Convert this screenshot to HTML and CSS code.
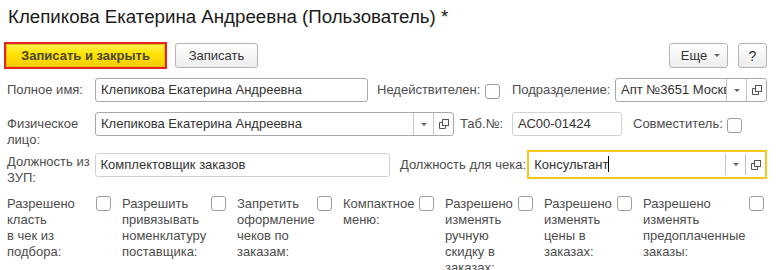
FILE: index.html
```html
<!DOCTYPE html>
<html lang="ru">
<head>
    <meta charset="UTF-8">
    <meta name="viewport" content="width=device-width, initial-scale=1.0">
    <title>Клепикова Екатерина Андреевна (Пользователь)</title>
    <link rel="stylesheet" href="styles.css">
</head>
<body>
<div class="page">
    <h1 class="title">Клепикова Екатерина Андреевна (Пользователь) *</h1>

    <div class="toolbar">
        <button class="btn btn-primary">Записать и закрыть</button>
        <button class="btn btn-write">Записать</button>
        <button class="btn btn-more">Еще <span class="arrow"></span></button>
        <button class="btn btn-help">?</button>
    </div>

    <div class="row row-1">
        <label class="lbl lbl-main">Полное имя:</label>
        <div class="field w-fullname"><span class="val">Клепикова Екатерина Андреевна</span></div>
        <label class="lbl lbl-invalid">Недействителен:</label>
        <span class="check"></span>
        <label class="lbl lbl-dept">Подразделение:</label>
        <div class="field select w-dept">
            <span class="val">Апт №3651 Москва</span>
            <span class="fbtn"><span class="arrow"></span></span>
            <span class="fbtn"><svg width="10" height="10" viewBox="0 0 10 10"><rect x="3.5" y="0.5" width="6" height="6" fill="none" stroke="#555"/><path d="M3.5 3.5H0.5V9.5H6.5V6.5" fill="none" stroke="#555"/></svg></span>
        </div>
    </div>

    <div class="row row-2">
        <label class="lbl lbl-main">Физическое<br>лицо:</label>
        <div class="field select w-person">
            <span class="val">Клепикова Екатерина Андреевна</span>
            <span class="fbtn"><span class="arrow"></span></span>
            <span class="fbtn"><svg width="10" height="10" viewBox="0 0 10 10"><rect x="3.5" y="0.5" width="6" height="6" fill="none" stroke="#555"/><path d="M3.5 3.5H0.5V9.5H6.5V6.5" fill="none" stroke="#555"/></svg></span>
        </div>
        <label class="lbl lbl-tab">Таб.№:</label>
        <div class="field readonly w-tab"><span class="val">АС00-01424</span></div>
        <label class="lbl lbl-part">Совместитель:</label>
        <span class="check"></span>
    </div>

    <div class="row row-3">
        <label class="lbl lbl-main">Должность из<br>ЗУП:</label>
        <div class="field readonly w-zup"><span class="val">Комплектовщик заказов</span></div>
        <label class="lbl lbl-check">Должность для чека:</label>
        <div class="field select focus w-check">
            <span class="val">Консультант<span class="caret"></span></span>
            <span class="fbtn"><span class="arrow"></span></span>
            <span class="fbtn"><svg width="10" height="10" viewBox="0 0 10 10"><rect x="3.5" y="0.5" width="6" height="6" fill="none" stroke="#555"/><path d="M3.5 3.5H0.5V9.5H6.5V6.5" fill="none" stroke="#555"/></svg></span>
        </div>
    </div>

    <div class="flags">
        <div class="flag"><label class="lbl" style="width: 83px">Разрешено<br>класть<br>в чек из<br>подбора:</label><span class="check"></span></div>
        <div class="flag"><label class="lbl" style="width: 83px">Разрешить<br>привязывать<br>номенклатуру<br>поставщика:</label><span class="check"></span></div>
        <div class="flag"><label class="lbl" style="width: 74px">Запретить<br>оформление<br>чеков по<br>заказам:</label><span class="check"></span></div>
        <div class="flag"><label class="lbl" style="width: 70px">Компактное<br>меню:</label><span class="check"></span></div>
        <div class="flag"><label class="lbl" style="width: 67px">Разрешено<br>изменять<br>ручную<br>скидку в<br>заказах:</label><span class="check"></span></div>
        <div class="flag"><label class="lbl" style="width: 67px">Разрешено<br>изменять<br>цены в<br>заказах:</label><span class="check"></span></div>
        <div class="flag"><label class="lbl" style="width: 100px">Разрешено<br>изменять<br>предоплаченные<br>заказы:</label><span class="check"></span></div>
    </div>
</div>
</body>
</html>
```

FILE: styles.css
```css
* {
    margin: 0;
    padding: 0;
    box-sizing: border-box;
}
body {
    font-family: "Liberation Sans", Arial, sans-serif;
    font-size: 13px;
    background-color: #ffffff;
    color: #4d4d4d;
    overflow: hidden;
}
.page {
    padding: 6px 10px 0 7px;
    height: 270px;
}
.title {
    font-size: 18.7px;
    font-weight: normal;
    line-height: 22px;
    color: #1a1a1a;
    padding-left: 1px;
}

/* command bar */
.toolbar {
    display: flex;
    align-items: center;
    margin-top: 14px;
    height: 27px;
}
.btn {
    font-family: inherit;
    font-size: 13px;
    color: #333;
    height: 25px;
    border: 1px solid #b4b4b4;
    border-radius: 3px;
    background: linear-gradient(#ffffff, #ececec);
    padding: 0 13px;
    display: flex;
    align-items: center;
    justify-content: center;
}
.btn-primary {
    margin-left: -1px;
    height: 23px;
    width: 159px;
    font-weight: bold;
    color: #4a4733;
    border: 1px solid #e2c000;
    border-radius: 0;
    background: linear-gradient(#fff04d, #ffe200 45%, #f4cc00);
    outline: 2px solid #e8212b;
    outline-offset: 0;
}
.btn-write {
    margin-left: 10px;
    width: 83px;
}
.btn-more {
    margin-left: auto;
    width: 59px;
    padding: 0 8px 0 12px;
    gap: 7px;
}
.btn-help {
    margin-left: 10px;
    width: 29px;
    padding: 0;
    font-size: 14px;
}
.arrow {
    display: inline-block;
    width: 0;
    height: 0;
    border-left: 3px solid transparent;
    border-right: 3px solid transparent;
    border-top: 3px solid #666;
}

/* form rows */
.row {
    display: flex;
    align-items: flex-start;
}
.row-1 {
    margin-top: 9px;
}
.row-2 {
    margin-top: 10px;
}
.row-3 {
    margin-top: 2px;
}
.lbl {
    line-height: 16px;
    padding-top: 4px;
    color: #4d4d4d;
    white-space: nowrap;
}
.lbl-main {
    width: 88px;
}
.lbl-invalid {
    margin-left: 9px;
    width: 108px;
}
.lbl-dept {
    margin-left: 12px;
    width: 103px;
}
.lbl-tab {
    margin-left: 6px;
    width: 52px;
}
.lbl-part {
    margin-left: 11px;
    width: 94px;
}
.lbl-check {
    margin-left: 10px;
    width: 128px;
    padding-top: 7px;
}

.field {
    display: flex;
    height: 24px;
    border: 1px solid #a9a9a9;
    border-radius: 3px;
    background-color: #fff;
    color: #333;
    overflow: hidden;
}
.field.readonly {
    border-color: #d2d2d2;
}
.val {
    flex: 1;
    padding-left: 5px;
    line-height: 22px;
    white-space: nowrap;
    overflow: hidden;
}
.fbtn {
    width: 20px;
    flex: none;
    border-left: 1px solid #c4c4c4;
    display: flex;
    align-items: center;
    justify-content: center;
}
.fbtn svg {
    display: block;
}
.field.focus {
    height: 29px;
    border: 2px solid #f5c61e;
    border-radius: 0;
}
.field.focus .val {
    line-height: 25px;
}
.field.focus .fbtn {
    margin: 2px 0;
}
.caret {
    display: inline-block;
    width: 1px;
    height: 16px;
    background-color: #000;
    vertical-align: -3px;
}
.w-fullname { width: 273px; }
.w-dept { width: 152px; }
.w-person { width: 359px; }
.w-tab { width: 110px; }
.w-zup { width: 297px; margin-top: 3px; }
.w-check { width: 241px; }

.check {
    flex: none;
    width: 15px;
    height: 15px;
    border: 1px solid #9d9d9d;
    border-radius: 3px;
    background-color: #fff;
}
.row-1 .check,
.row-2 .check {
    margin-top: 6px;
}

/* flag checkboxes */
.flags {
    display: flex;
    margin-top: 10px;
}
.flag {
    display: flex;
    align-items: flex-start;
    margin-right: 11px;
}
.flag .lbl {
    padding-top: 0;
    margin-right: 6px;
}
.flag .check {
    margin-top: 0;
}
```
